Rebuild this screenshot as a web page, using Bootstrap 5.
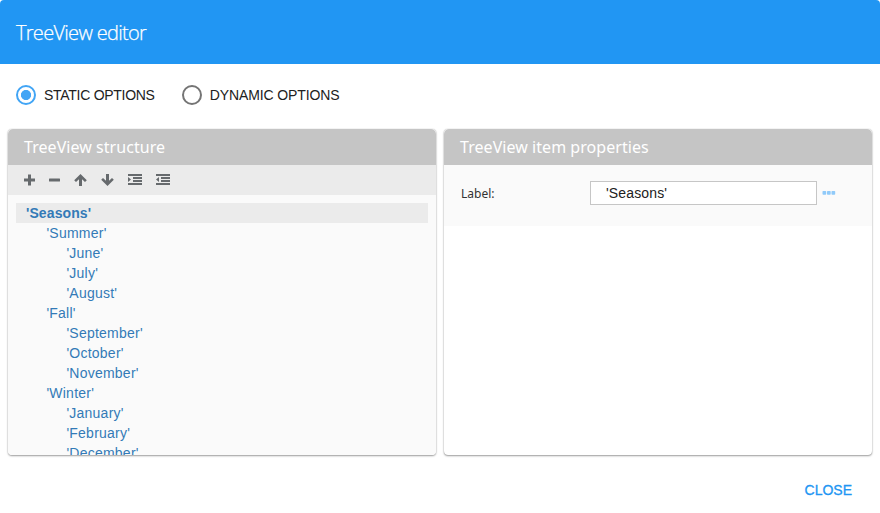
<!DOCTYPE html>
<html lang="en">
<head>
<meta charset="utf-8">
<meta name="viewport" content="width=device-width, initial-scale=1">
<title>TreeView editor</title>
<link href="https://cdn.jsdelivr.net/npm/bootstrap@5.3.0/dist/css/bootstrap.min.css" rel="stylesheet">
<style>
body{font-family:"Liberation Sans",Arial,sans-serif;font-size:14px;line-height:20px;color:#212121;background:#fff}
.dialog-shell{height:513px;border-radius:4px 4px 0 0}
.dialog-head{height:64px;background:#2196f3;padding:2px 0 0 16px}
.dialog-title{font:300 20px/28px "Open Sans","Noto Sans",sans-serif;letter-spacing:-.7px;color:#fff;-webkit-text-stroke:.25px #fff}
.mode-row{height:65px;padding:0 16px 3px}
.mode-option{gap:8px;letter-spacing:-.28px}
.mode-option + .mode-option{margin-left:27px;letter-spacing:-.11px}
.mode-option .form-check-input{width:20px;height:20px;border:2px solid #757575;box-shadow:none;background-image:none}
.mode-option .form-check-input:checked{border-color:#42a5f5;background:radial-gradient(circle,#42a5f5 0 4.7px,#fff 5.4px)}
.panel-row{height:326px;padding:0 8px;gap:8px}
.panel-box{border:0;border-radius:4px;box-shadow:0 1px 2px rgba(0,0,0,.38),0 0 1px rgba(0,0,0,.3)}
.panel-head{height:36px;padding:0 16px;background:#c5c5c5;color:#fff;border:0;border-radius:0}
.panel-head h2{font:400 16px/24px "Noto Sans",sans-serif;letter-spacing:.05px}
.tree-tools{height:30px;background:#ebebeb;padding:0 16px;color:#666a6d}
.tree-tools button{line-height:0;color:inherit}
.tree-tools svg{display:block;fill:currentColor}
.tree-pane{background:#fafafa;padding:8px 8px 0;min-height:0}
.tree-list a{display:block;height:20px;color:#337ab7;text-decoration:none;padding-left:10px;letter-spacing:.24px}
.tree-list .level-two{padding-left:30.4px}
.tree-list .level-three{padding-left:50.4px}
.tree-list a.picked{background:#ebebeb;font-weight:700;letter-spacing:.1px}
.props-form{height:61px;background:#fafafa;padding:16px 17px 0}
.props-form label{width:129px;font:400 12px/24px "Noto Sans",sans-serif;color:#333;padding-top:1px}
.props-form .form-control{width:227px;height:24px;border:1px solid #c6c6c6;border-radius:0;padding:0 15px;font-size:14px;color:#212121;letter-spacing:.15px}
.more-btn{margin-left:5px;line-height:0}
.dialog-foot{padding:25px 28px 0}
.close-btn{color:#2196f3;font-size:14px;line-height:20px;-webkit-text-stroke:.3px #2196f3}
</style>
<script src="https://cdn.jsdelivr.net/npm/bootstrap@5.3.0/dist/js/bootstrap.bundle.min.js"></script>
</head>
<body>
<main class="dialog-shell overflow-hidden">
  <header class="dialog-head d-flex align-items-center"><h1 class="dialog-title mb-0">TreeView editor</h1></header>
  <div class="mode-row d-flex align-items-center">
    <label class="mode-option d-flex align-items-center"><input class="form-check-input m-0" type="radio" name="mode" checked><span>STATIC OPTIONS</span></label>
    <label class="mode-option d-flex align-items-center"><input class="form-check-input m-0" type="radio" name="mode"><span>DYNAMIC OPTIONS</span></label>
  </div>
  <div class="panel-row d-flex">
    <section class="panel-box card flex-fill w-50 overflow-hidden">
      <div class="panel-head card-header d-flex align-items-center flex-shrink-0"><h2 class="mb-0">TreeView structure</h2></div>
      <div class="tree-tools d-flex align-items-center flex-shrink-0">
        <button class="btn border-0 p-0" aria-label="Add"><svg width="25" height="14" viewBox="0 0 25 14"><path d="M4 1.5h3v4h4v3H7v4H4v-4H0v-3h4z"/></svg></button>
        <button class="btn border-0 p-0" aria-label="Remove"><svg width="25" height="14" viewBox="0 0 25 14"><rect y="5.5" width="11" height="3" rx=".5"/></svg></button>
        <button class="btn border-0 p-0" aria-label="Move up"><svg width="27" height="14" viewBox="0 0 27 14"><path d="M6.5 1 12.8 7.3 11 9.1 8 6.3V13H5V6.3L2 9.1.2 7.3z"/></svg></button>
        <button class="btn border-0 p-0" aria-label="Move down"><svg width="27" height="14" viewBox="0 0 27 14"><path d="M6.5 13 12.8 6.7 11 4.9 8 7.7V1H5v6.7L2 4.9.2 6.7z"/></svg></button>
        <button class="btn border-0 p-0" aria-label="Indent"><svg width="28" height="14" viewBox="0 0 28 14"><path d="M0 1h14v2H0zM5 4h9v2H5zM5 7h9v2H5zM0 10h14v2H0zM0 4l3 2.5L0 9z"/></svg></button>
        <button class="btn border-0 p-0" aria-label="Outdent"><svg width="14" height="14" viewBox="0 0 14 14"><path d="M0 1h14v2H0zM5 4h9v2H5zM5 7h9v2H5zM0 10h14v2H0zM3 4 0 6.5 3 9z"/></svg></button>
      </div>
      <div class="tree-pane flex-grow-1 overflow-hidden">
        <nav class="tree-list">
          <a href="#" class="picked">'Seasons'</a>
          <a href="#" class="level-two">'Summer'</a>
          <a href="#" class="level-three">'June'</a>
          <a href="#" class="level-three">'July'</a>
          <a href="#" class="level-three">'August'</a>
          <a href="#" class="level-two">'Fall'</a>
          <a href="#" class="level-three">'September'</a>
          <a href="#" class="level-three">'October'</a>
          <a href="#" class="level-three">'November'</a>
          <a href="#" class="level-two">'Winter'</a>
          <a href="#" class="level-three">'January'</a>
          <a href="#" class="level-three">'February'</a>
          <a href="#" class="level-three">'December'</a>
        </nav>
      </div>
    </section>
    <section class="panel-box card flex-fill w-50 overflow-hidden">
      <div class="panel-head card-header d-flex align-items-center flex-shrink-0"><h2 class="mb-0">TreeView item properties</h2></div>
      <div class="props-form d-flex align-items-start">
        <label for="item-label">Label:</label>
        <input id="item-label" class="form-control" type="text" value="'Seasons'">
        <button class="more-btn btn border-0 p-0" aria-label="More"><svg width="14" height="24" viewBox="0 0 14 24" fill="#90caf9"><rect x=".5" y="10" width="3.7" height="3.7" rx=".7"/><rect x="5" y="10" width="3.7" height="3.7" rx=".7"/><rect x="9.5" y="10" width="3.7" height="3.7" rx=".7"/></svg></button>
      </div>
    </section>
  </div>
  <footer class="dialog-foot d-flex justify-content-end"><button class="close-btn btn border-0 p-0">CLOSE</button></footer>
</main>
</body>
</html>
